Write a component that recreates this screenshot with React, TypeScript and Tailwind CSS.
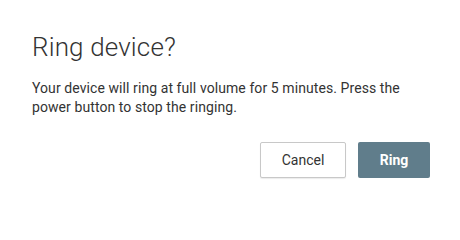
export default function App() {
  return (
    <div className="h-[207px] w-[460px] bg-white font-['Roboto',sans-serif] text-[#333]">
      <div className="px-8 pt-[31px]">
        <h1 className="text-[26px] font-light leading-[32px] tracking-[0.15px] text-[#333]">Ring device?</h1>
        <p className="mt-[16px] text-[14px] leading-[19px] tracking-[0.08px] text-[#333]">
          Your device will ring at full volume for 5 minutes. Press the power button to stop the ringing.
        </p>
      </div>
      <div className="mt-[25px] flex justify-end gap-3 pr-[30px]">
        <button
          type="button"
          className="h-[36px] w-[86px] rounded-[2px] border border-[#c8c8c8] bg-white text-[14px] text-[#333] shadow-[0_1px_1px_rgba(0,0,0,0.08)]"
        >
          Cancel
        </button>
        <button
          type="button"
          className="h-[36px] w-[72px] rounded-[2px] bg-[#607d8b] text-[14px] font-bold text-white"
        >
          Ring
        </button>
      </div>
    </div>
  );
}
